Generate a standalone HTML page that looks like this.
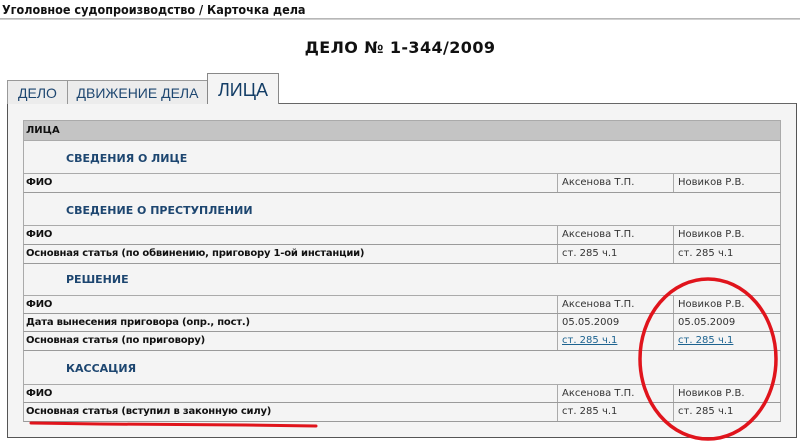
<!DOCTYPE html>
<html><head><meta charset="utf-8"><style>
*{margin:0;padding:0;box-sizing:border-box}
body{width:800px;height:445px;background:#fff;position:relative;overflow:hidden;font-family:"DejaVu Sans","Liberation Sans",sans-serif;color:#111}
.a{position:absolute}
.bc{left:2px;top:2px;font-size:12.5px;font-weight:bold;letter-spacing:0;font-family:"DejaVu Sans Condensed","DejaVu Sans",sans-serif}
.bl{left:0;top:18px;width:800px;height:2px;background:linear-gradient(#aaa,#ddd)}
.title{left:0;width:800px;top:38px;text-align:center;font-size:16px;font-weight:bold;letter-spacing:0.4px}
.tab{top:80px;height:24px;background:#ececec;border:1px solid #999;border-bottom:none;color:#1d4670;font-size:14px;text-align:center;line-height:24px;font-family:"Liberation Sans",sans-serif}
.panel{left:7px;top:103px;width:790px;height:335px;background:#f4f4f4;border:1px solid #555;border-top:1px solid #666}
.r{position:absolute;left:23px;width:758px;border-bottom:1px solid #9a9a9a;font-size:10px;font-weight:bold;letter-spacing:-0.2px}
.r span{position:absolute;top:0;padding-left:2px}
.c2,.c3{position:absolute;top:0;height:100%;border-left:1px solid #aaa;font-weight:normal;color:#333;padding-left:4px;letter-spacing:0}
.c2{left:533px;width:116px}.c3{left:649px;width:109px}
.sec{position:absolute;left:23px;width:758px;border-bottom:1px solid #aaa;border-left:1px solid #aaa;border-right:1px solid #aaa}
.sec span{position:absolute;left:42px;font-size:11px;font-weight:bold;color:#1d4670}
a{color:#1d6390;text-decoration:underline}
</style></head><body>
<div class="a bc">Уголовное судопроизводство / Карточка дела</div>
<div class="a bl"></div>
<div class="a title">ДЕЛО № 1-344/2009</div>
<div class="a panel"></div>
<div class="a tab" style="left:7px;width:61px">ДЕЛО</div>
<div class="a tab" style="left:67px;width:141px">ДВИЖЕНИЕ ДЕЛА</div>
<div class="a tab" style="left:207px;top:73px;height:31px;width:72px;background:#f4f4f4;border-color:#888;font-size:18px;line-height:32px;color:#133d66">ЛИЦА</div>
<div class="a" style="left:23px;top:120px;width:758px;height:21px;background:#c4c4c4;border:1px solid #aaa;font-size:10px;font-weight:bold;padding:4px 2px">ЛИЦА</div>

<div class="sec" style="top:141px;height:33px"><span style="top:11px">СВЕДЕНИЯ О ЛИЦЕ</span></div>
<div class="r" style="top:174px;height:19px;border-left:1px solid #aaa;border-right:1px solid #aaa;line-height:18px"><span>ФИО</span><div class="c2">Аксенова Т.П.</div><div class="c3">Новиков Р.В.</div></div>
<div class="sec" style="top:193px;height:33px"><span style="top:11px">СВЕДЕНИЕ О ПРЕСТУПЛЕНИИ</span></div>
<div class="r" style="top:226px;height:19px;border-left:1px solid #aaa;border-right:1px solid #aaa;line-height:18px"><span>ФИО</span><div class="c2">Аксенова Т.П.</div><div class="c3">Новиков Р.В.</div></div>
<div class="r" style="top:245px;height:19px;border-left:1px solid #aaa;border-right:1px solid #aaa;line-height:18px"><span>Основная статья (по обвинению, приговору 1-ой инстанции)</span><div class="c2">ст. 285 ч.1</div><div class="c3">ст. 285 ч.1</div></div>
<div class="sec" style="top:264px;height:32px"><span style="top:9px">РЕШЕНИЕ</span></div>
<div class="r" style="top:296px;height:18px;border-left:1px solid #aaa;border-right:1px solid #aaa;line-height:17px"><span>ФИО</span><div class="c2">Аксенова Т.П.</div><div class="c3">Новиков Р.В.</div></div>
<div class="r" style="top:314px;height:18px;border-left:1px solid #aaa;border-right:1px solid #aaa;line-height:17px"><span>Дата вынесения приговора (опр., пост.)</span><div class="c2">05.05.2009</div><div class="c3">05.05.2009</div></div>
<div class="r" style="top:332px;height:19px;border-left:1px solid #aaa;border-right:1px solid #aaa;line-height:18px"><span>Основная статья (по приговору)</span><div class="c2"><a>ст. 285 ч.1</a></div><div class="c3"><a>ст. 285 ч.1</a></div></div>
<div class="sec" style="top:351px;height:34px"><span style="top:11px">КАССАЦИЯ</span></div>
<div class="r" style="top:385px;height:18px;border-left:1px solid #aaa;border-right:1px solid #aaa;line-height:17px"><span>ФИО</span><div class="c2">Аксенова Т.П.</div><div class="c3">Новиков Р.В.</div></div>
<div class="r" style="top:403px;height:19px;border-left:1px solid #aaa;border-right:1px solid #aaa;line-height:18px"><span>Основная статья (вступил в законную силу)</span><div class="c2">ст. 285 ч.1</div><div class="c3">ст. 285 ч.1</div></div>

<svg class="a" style="left:0;top:0" width="800" height="445">
<ellipse cx="708" cy="359" rx="68" ry="80" fill="none" stroke="#e0141c" stroke-width="3.5"/>
<path d="M31 423 L100 424 L245 425 L316 426" fill="none" stroke="#e0141c" stroke-width="3" stroke-linecap="round"/>
</svg>
</body></html>
